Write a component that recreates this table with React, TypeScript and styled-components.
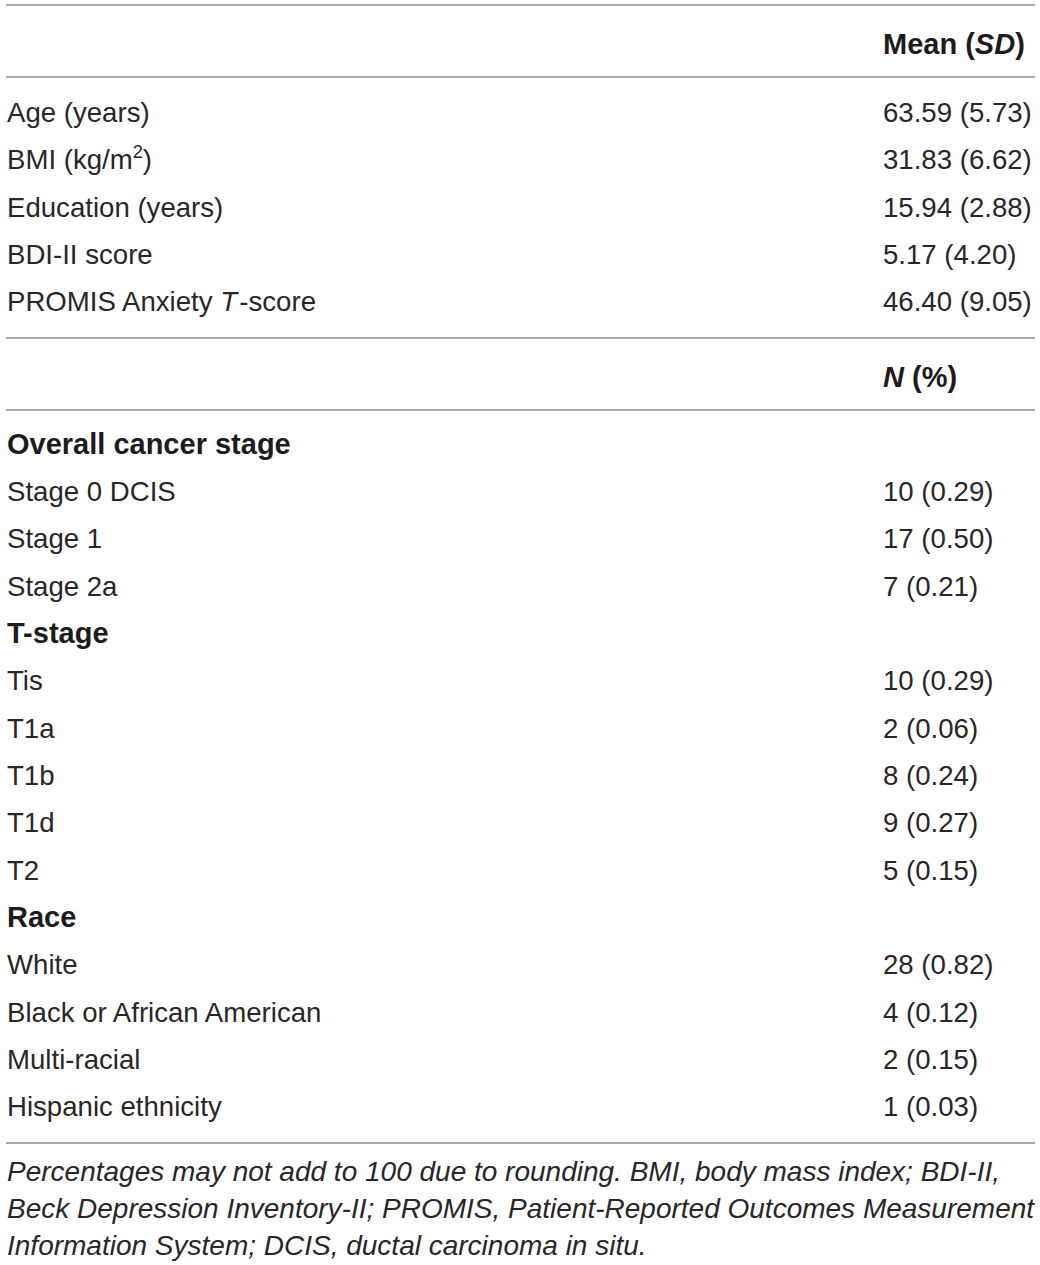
import React from "react";
import styled, { createGlobalStyle } from "styled-components";

const Global = createGlobalStyle`
  html, body { margin: 0; padding: 0; background: #ffffff; }
  body {
    font-family: "Liberation Sans", Arial, Helvetica, sans-serif;
    color: #231f20;
  }
`;

const Page = styled.div`
  width: 1029px;
  padding: 4px 5px 0 6px;
`;

const Rule = styled.div`
  height: 2px;
  background: #a9a9a9;
`;

const HeaderRow = styled.div`
  display: grid;
  grid-template-columns: 877px 1fr;
  padding: 15px 0 8px;
  font-size: 29px;
  line-height: 47px;
  font-weight: 700;
  color: #1e1b1c;
`;

const Section = styled.div<{ $top: number; $bottom: number }>`
  padding: ${(p) => p.$top}px 0 ${(p) => p.$bottom}px;
`;

const Row = styled.div<{ $group?: boolean }>`
  display: grid;
  grid-template-columns: 877px 1fr;
  font-size: ${(p) => (p.$group ? 29 : 27.6)}px;
  line-height: 47.33px;
  font-weight: ${(p) => (p.$group ? 700 : 400)};
  color: ${(p) => (p.$group ? "#1e1b1c" : "#2a2627")};
  white-space: nowrap;
`;

const Label = styled.div`
  padding-left: 1px;
`;

const Value = styled.div``;

const Sup = styled.sup`
  font-size: 0.66em;
  line-height: 0;
  vertical-align: 0.6em;
`;

const Footnote = styled.p`
  margin: 0;
  padding: 9px 0 0 1px;
  font-size: 28px;
  line-height: 37px;
  font-style: italic;
  color: #2a2627;
  white-space: nowrap;
`;

type R = { label: React.ReactNode; value?: string; group?: boolean };

const meanRows: R[] = [
  { label: "Age (years)", value: "63.59 (5.73)" },
  {
    label: (
      <>
        BMI (kg/m<Sup>2</Sup>)
      </>
    ),
    value: "31.83 (6.62)",
  },
  { label: "Education (years)", value: "15.94 (2.88)" },
  { label: "BDI-II score", value: "5.17 (4.20)" },
  {
    label: (
      <>
        PROMIS Anxiety <i>T</i>&#8202;-score
      </>
    ),
    value: "46.40 (9.05)",
  },
];

const countRows: R[] = [
  { label: "Overall cancer stage", group: true },
  { label: "Stage 0 DCIS", value: "10 (0.29)" },
  { label: "Stage 1", value: "17 (0.50)" },
  { label: "Stage 2a", value: "7 (0.21)" },
  { label: "T-stage", group: true },
  { label: "Tis", value: "10 (0.29)" },
  { label: "T1a", value: "2 (0.06)" },
  { label: "T1b", value: "8 (0.24)" },
  { label: "T1d", value: "9 (0.27)" },
  { label: "T2", value: "5 (0.15)" },
  { label: "Race", group: true },
  { label: "White", value: "28 (0.82)" },
  { label: "Black or African American", value: "4 (0.12)" },
  { label: "Multi-racial", value: "2 (0.15)" },
  { label: "Hispanic ethnicity", value: "1 (0.03)" },
];

export default function App() {
  return (
    <Page>
      <Global />
      <Rule />
      <HeaderRow>
        <span />
        <span>
          Mean (<i>SD</i>)
        </span>
      </HeaderRow>
      <Rule />
      <Section $top={11} $bottom={11}>
        {meanRows.map((r, i) => (
          <Row key={i}>
            <Label>{r.label}</Label>
            <Value>{r.value}</Value>
          </Row>
        ))}
      </Section>
      <Rule />
      <HeaderRow>
        <span />
        <span>
          <i>N</i> (%)
        </span>
      </HeaderRow>
      <Rule />
      <Section $top={10} $bottom={11}>
        {countRows.map((r, i) => (
          <Row key={i} $group={r.group}>
            <Label>{r.label}</Label>
            <Value>{r.value ?? ""}</Value>
          </Row>
        ))}
      </Section>
      <Rule />
      <Footnote>
        Percentages may not add to 100 due to rounding. BMI, body mass index; BDI-II,
        <br />
        Beck Depression Inventory-II; PROMIS, Patient-Reported Outcomes Measurement
        <br />
        Information System; DCIS, ductal carcinoma in situ.
      </Footnote>
    </Page>
  );
}
